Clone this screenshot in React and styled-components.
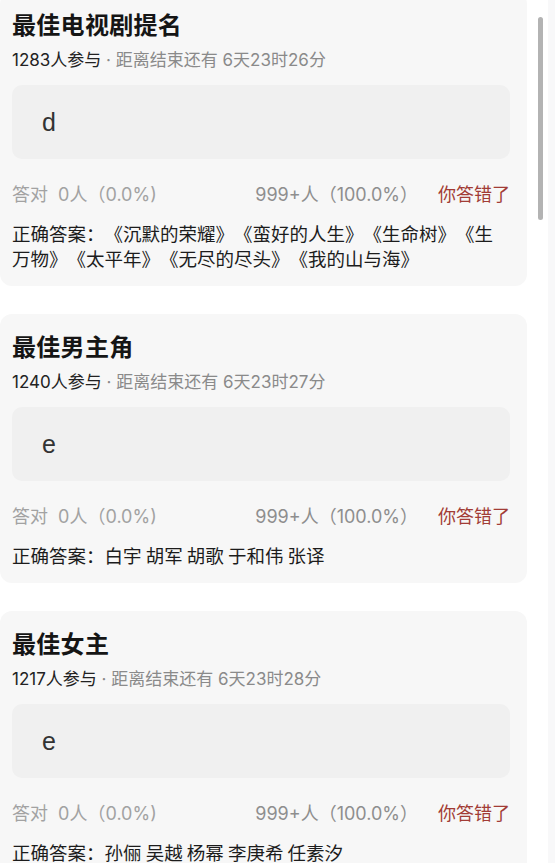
import React from 'react';
import styled, { createGlobalStyle } from 'styled-components';

const GlobalStyle = createGlobalStyle`
  html, body {
    margin: 0;
    padding: 0;
    background: #ffffff;
    overflow: hidden;
  }
  body {
    font-family: "Inter", "Noto Sans CJK SC", sans-serif;
    -webkit-font-smoothing: antialiased;
    text-spacing-trim: space-all;
  }
`;

const Page = styled.div`
  width: 555px;
  height: 863px;
  overflow: hidden;
  position: relative;
`;

const List = styled.div`
  display: flex;
  flex-direction: column;
  gap: 28px;
  width: 527px;
  margin-top: -8px;
`;

const Card = styled.section`
  background: #f7f7f7;
  border-radius: 12px;
  padding: 17px 17px 15px 12px;
`;

const Title = styled.h2`
  margin: 0;
  font-family: "Noto Sans CJK SC", sans-serif;
  font-size: 24px;
  font-weight: 700;
  line-height: 30px;
  color: #151515;
  letter-spacing: 0.3px;
`;

const Meta = styled.div`
  margin-top: 10px;
  font-size: 17px;
  line-height: 22px;
  color: #8a8a8a;
`;

const Count = styled.span`
  color: #222222;
`;

const AnswerBox = styled.div`
  margin-top: 14px;
  height: 74px;
  display: flex;
  align-items: center;
  padding-left: 30px;
  background: #f0f0f0;
  border-radius: 10px;
  font-family: "Liberation Sans", sans-serif;
  font-size: 25px;
  color: #333333;
`;

const Stats = styled.div`
  margin-top: 23px;
  display: flex;
  align-items: center;
  font-size: 18px;
  line-height: 26px;
  color: #a2a2a2;
`;

const Right = styled.div`
  margin-left: auto;
  display: flex;
  gap: 20px;
  color: #8e8e8e;
`;

const Wrong = styled.span`
  color: #a23c36;
`;

const Correct = styled.p`
  margin: 13px 0 0;
  font-family: "Noto Sans CJK SC", sans-serif;
  font-size: 18.5px;
  line-height: 25px;
  color: #1c1c1c;
  text-spacing-trim: space-all;
`;

const ScrollTrack = styled.div`
  position: absolute;
  top: 0;
  right: 0;
  width: 7px;
  height: 100%;
  background: #f8f8f9;
`;

const ScrollThumb = styled.div`
  position: absolute;
  top: 17px;
  left: 538px;
  width: 5px;
  height: 203px;
  border-radius: 3px;
  background: #b3b3b3;
`;

const awards = [
  {
    title: '最佳电视剧提名',
    count: '1283人参与',
    time: '6天23时26分',
    pick: 'd',
    answer: '《沉默的荣耀》《蛮好的人生》《生命树》《生万物》《太平年》《无尽的尽头》《我的山与海》',
  },
  {
    title: '最佳男主角',
    count: '1240人参与',
    time: '6天23时27分',
    pick: 'e',
    answer: '白宇 胡军 胡歌 于和伟 张译',
  },
  {
    title: '最佳女主',
    count: '1217人参与',
    time: '6天23时28分',
    pick: 'e',
    answer: '孙俪 吴越 杨幂 李庚希 任素汐',
  },
];

export default function App() {
  return (
    <Page>
      <GlobalStyle />
      <List>
        {awards.map((a) => (
          <Card key={a.title}>
            <Title>{a.title}</Title>
            <Meta>
              <Count>{a.count}</Count> · 距离结束还有 {a.time}
            </Meta>
            <AnswerBox>{a.pick}</AnswerBox>
            <Stats>
              <span>答对&nbsp;&nbsp;0人（0.0%)</span>
              <Right>
                <span>999+人（100.0%）</span>
                <Wrong>你答错了</Wrong>
              </Right>
            </Stats>
            <Correct>正确答案：{a.answer}</Correct>
          </Card>
        ))}
      </List>
      <ScrollTrack />
      <ScrollThumb />
    </Page>
  );
}
